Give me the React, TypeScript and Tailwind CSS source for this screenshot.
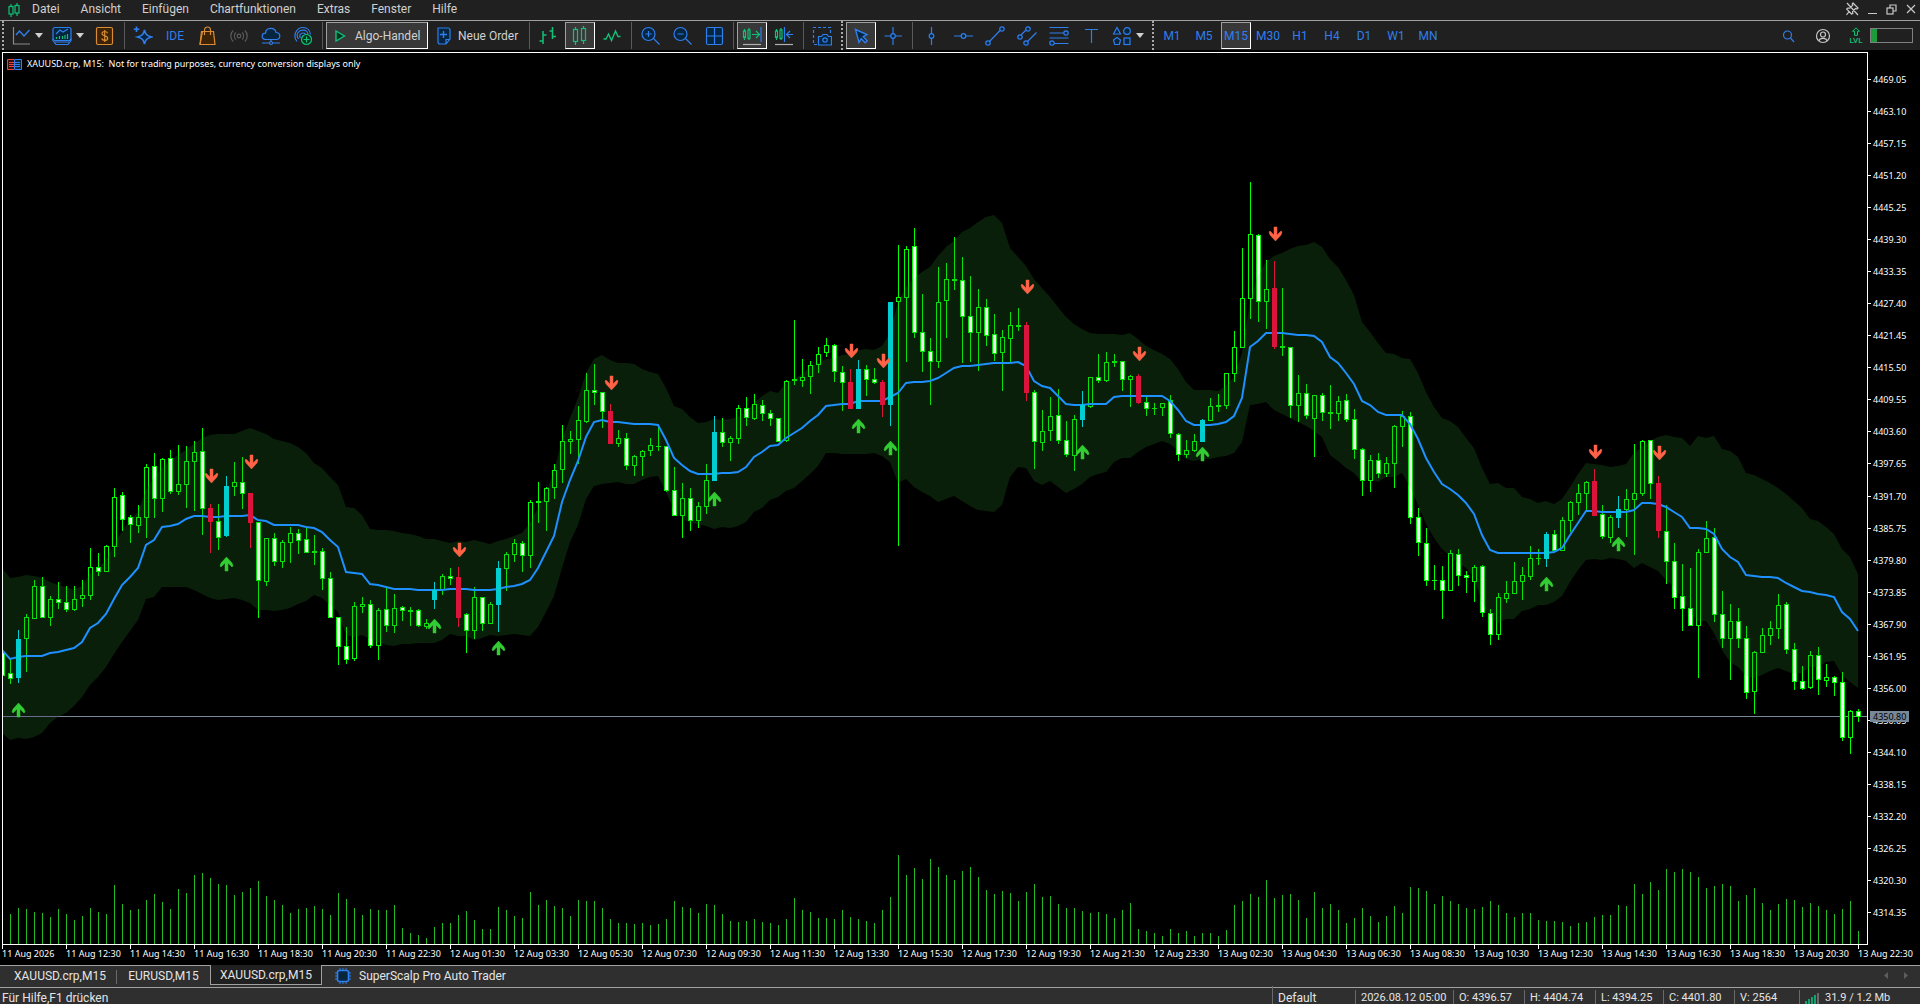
import React, { useState } from 'react';

type Kind = 'u' | 'd' | 'b' | 'r';
type Candle = [Kind, number, number, number, number];

const STEP = 8;
const PLOT_BOTTOM = 944;
const PLOT_RIGHT = 1867;

// kind, high, body top, body bottom, low
const candles: Candle[] = [
    ['d', 652, 652, 676, 676], ['d', 659, 673, 679, 684], ['b', 630, 639, 678, 683], ['u', 614, 617, 639, 672],
    ['u', 580, 586, 619, 619], ['d', 577, 586, 618, 618], ['u', 596, 599, 618, 626], ['d', 582, 599, 603, 609],
    ['d', 586, 602, 610, 612], ['u', 586, 599, 610, 611], ['u', 580, 595, 599, 607], ['u', 548, 567, 596, 600],
    ['d', 553, 567, 572, 576], ['u', 545, 546, 572, 572], ['u', 488, 497, 547, 557], ['d', 492, 495, 520, 531],
    ['d', 515, 517, 525, 543], ['u', 505, 517, 526, 533], ['u', 464, 467, 518, 538], ['d', 453, 466, 499, 518],
    ['u', 458, 459, 499, 512], ['d', 450, 458, 492, 494], ['u', 445, 484, 492, 495], ['u', 446, 461, 485, 508],
    ['u', 441, 452, 462, 511], ['d', 428, 451, 509, 535], ['r', 504, 508, 522, 553], ['d', 504, 521, 538, 550],
    ['b', 476, 486, 536, 537], ['u', 462, 482, 487, 496], ['d', 457, 482, 494, 509], ['r', 493, 493, 523, 548],
    ['d', 522, 522, 581, 618], ['u', 538, 538, 582, 586], ['d', 533, 538, 562, 566], ['u', 540, 542, 562, 568],
    ['u', 527, 533, 543, 563], ['d', 529, 533, 541, 554], ['d', 528, 539, 553, 553], ['d', 535, 551, 553, 565],
    ['d', 548, 551, 579, 590], ['d', 572, 578, 618, 618], ['d', 617, 617, 647, 665], ['d', 627, 646, 660, 664],
    ['u', 602, 606, 659, 661], ['u', 597, 604, 607, 613], ['d', 600, 604, 646, 648], ['u', 608, 610, 646, 660],
    ['d', 588, 609, 626, 632], ['u', 594, 608, 626, 633], ['d', 606, 607, 611, 621], ['d', 607, 610, 612, 626],
    ['d', 609, 610, 626, 627], ['u', 619, 623, 627, 629], ['b', 582, 590, 600, 609], ['u', 574, 576, 590, 595],
    ['d', 568, 576, 579, 585], ['r', 567, 577, 618, 627], ['d', 613, 614, 631, 653], ['u', 587, 597, 631, 639],
    ['d', 597, 597, 624, 631], ['u', 602, 604, 624, 624], ['b', 561, 568, 605, 632], ['u', 552, 554, 569, 591],
    ['u', 539, 543, 555, 562], ['d', 541, 543, 556, 572], ['u', 500, 502, 556, 568], ['d', 482, 501, 503, 523],
    ['u', 487, 488, 502, 531], ['u', 464, 470, 488, 499], ['u', 425, 441, 470, 483], ['u', 431, 439, 442, 454],
    ['u', 406, 420, 440, 464], ['u', 373, 390, 422, 423], ['d', 364, 390, 393, 405], ['d', 392, 392, 412, 428],
    ['r', 404, 411, 444, 444], ['u', 430, 438, 444, 447], ['d', 433, 438, 466, 470], ['u', 455, 456, 466, 476],
    ['u', 450, 451, 457, 476], ['u', 438, 445, 451, 456], ['d', 425, 446, 447, 451], ['d', 446, 446, 491, 492],
    ['d', 467, 490, 516, 516], ['u', 483, 498, 516, 538], ['d', 488, 498, 521, 531], ['u', 502, 506, 521, 528],
    ['u', 464, 480, 507, 514], ['b', 416, 432, 481, 481], ['d', 418, 432, 443, 447], ['u', 436, 438, 443, 461],
    ['u', 405, 408, 439, 444], ['d', 397, 408, 418, 426], ['u', 394, 404, 419, 420], ['d', 400, 405, 414, 421],
    ['d', 410, 413, 419, 426], ['d', 418, 418, 442, 442], ['u', 380, 381, 441, 442], ['d', 320, 379, 381, 385],
    ['u', 359, 377, 381, 387], ['u', 361, 365, 377, 394], ['u', 347, 354, 365, 373], ['u', 338, 345, 353, 357],
    ['d', 344, 345, 372, 382], ['d', 366, 372, 383, 411], ['r', 369, 382, 409, 409], ['b', 360, 369, 409, 409],
    ['d', 365, 369, 380, 396], ['d', 368, 379, 383, 384], ['r', 380, 382, 405, 417], ['b', 302, 302, 405, 426],
    ['u', 245, 297, 302, 546], ['u', 246, 249, 298, 362], ['d', 228, 246, 333, 338], ['d', 294, 332, 352, 372],
    ['d', 338, 351, 362, 405], ['u', 267, 302, 362, 368], ['u', 263, 279, 301, 338], ['d', 237, 279, 281, 290],
    ['d', 257, 280, 317, 363], ['d', 276, 316, 333, 362], ['u', 289, 307, 333, 371], ['d', 299, 307, 336, 346],
    ['d', 314, 334, 354, 361], ['u', 330, 337, 353, 391], ['u', 312, 325, 339, 362], ['d', 308, 325, 327, 331],
    ['r', 322, 325, 393, 401], ['d', 390, 392, 442, 469], ['u', 410, 431, 443, 451], ['u', 397, 416, 431, 441],
    ['d', 389, 415, 441, 444], ['d', 421, 440, 455, 457], ['u', 415, 419, 456, 471], ['b', 391, 405, 420, 427],
    ['u', 377, 377, 407, 408], ['d', 354, 377, 381, 383], ['u', 352, 362, 381, 382], ['d', 354, 361, 363, 367],
    ['d', 361, 361, 380, 391], ['u', 375, 376, 380, 407], ['r', 374, 376, 403, 404], ['d', 397, 402, 409, 416],
    ['d', 403, 408, 409, 415], ['u', 403, 403, 408, 416], ['d', 395, 400, 434, 438], ['d', 433, 434, 455, 461],
    ['u', 440, 450, 455, 458], ['u', 434, 441, 451, 452], ['b', 419, 420, 442, 442], ['u', 398, 406, 421, 421],
    ['d', 394, 405, 407, 412], ['u', 373, 373, 406, 409], ['u', 331, 347, 374, 382], ['u', 248, 298, 348, 348],
    ['u', 182, 234, 299, 319], ['d', 234, 235, 302, 322], ['u', 260, 289, 302, 329], ['r', 261, 288, 347, 349],
    ['d', 288, 346, 348, 356], ['d', 347, 347, 406, 418], ['u', 375, 393, 406, 422], ['d', 384, 393, 416, 419],
    ['u', 395, 395, 419, 457], ['d', 393, 395, 413, 421], ['d', 385, 412, 414, 429], ['u', 396, 401, 414, 421],
    ['d', 394, 400, 420, 422], ['d', 409, 419, 450, 459], ['d', 448, 449, 481, 496], ['u', 455, 460, 481, 492],
    ['d', 453, 460, 474, 478], ['u', 457, 463, 474, 477], ['u', 425, 426, 464, 488], ['u', 411, 416, 427, 447],
    ['d', 412, 416, 518, 524], ['d', 508, 517, 543, 556], ['d', 528, 543, 581, 586], ['d', 565, 580, 581, 590],
    ['d', 566, 580, 591, 619], ['u', 550, 553, 591, 591], ['d', 549, 554, 576, 586], ['d', 571, 575, 578, 593],
    ['u', 565, 567, 582, 602], ['d', 565, 566, 613, 617], ['d', 609, 613, 635, 645], ['u', 593, 597, 635, 640],
    ['u', 581, 593, 599, 603], ['u', 562, 581, 594, 594], ['u', 567, 575, 582, 600], ['u', 546, 558, 577, 580],
    ['d', 549, 558, 559, 565], ['b', 532, 534, 559, 567], ['d', 530, 534, 551, 551], ['u', 517, 520, 551, 551],
    ['u', 501, 502, 521, 532], ['u', 484, 493, 503, 515], ['u', 481, 482, 494, 511], ['r', 469, 481, 516, 516],
    ['d', 505, 514, 537, 539], ['u', 515, 517, 538, 543], ['b', 496, 509, 518, 528], ['u', 489, 499, 510, 537],
    ['u', 444, 493, 500, 555], ['u', 440, 441, 494, 496], ['d', 440, 440, 484, 499], ['r', 476, 483, 531, 538],
    ['d', 505, 531, 562, 584], ['d', 543, 561, 598, 609], ['d', 564, 596, 609, 631], ['d', 568, 608, 626, 626],
    ['u', 549, 552, 626, 678], ['u', 521, 538, 553, 553], ['d', 528, 537, 615, 622], ['d', 591, 614, 639, 648],
    ['u', 604, 621, 639, 680], ['d', 608, 621, 639, 648], ['d', 626, 638, 693, 699], ['u', 651, 652, 692, 714],
    ['u', 628, 635, 653, 653], ['u', 621, 628, 636, 645], ['u', 594, 605, 629, 639], ['d', 602, 604, 650, 654],
    ['d', 643, 649, 682, 690], ['d', 666, 681, 689, 690], ['u', 651, 655, 688, 689], ['d', 647, 655, 680, 695],
    ['u', 664, 677, 681, 687], ['d', 676, 677, 683, 696], ['d', 672, 682, 738, 741], ['u', 710, 711, 738, 754],
    ['d', 709, 711, 717, 722],
];

const middle = [
    650, 659, 657, 656, 656, 656, 653, 652, 650, 648, 642, 628, 623, 614, 599, 585, 577, 568, 545, 540,
    527, 526, 524, 519, 516, 516, 517, 517, 516, 516, 516, 515, 520, 521, 525, 525, 525, 525, 527, 528,
    532, 540, 547, 572, 573, 574, 584, 585, 587, 589, 589, 589, 590, 590, 590, 590, 589, 589, 589, 590,
    590, 590, 589, 587, 586, 584, 580, 568, 552, 536, 502, 480, 461, 437, 422, 420, 422, 422, 423, 424,
    424, 424, 425, 440, 458, 465, 471, 474, 474, 474, 473, 473, 472, 467, 457, 452, 446, 445, 438, 433,
    428, 421, 415, 406, 405, 404, 404, 401, 401, 401, 401, 397, 393, 383, 382, 382, 381, 378, 373, 368,
    366, 366, 365, 364, 363, 363, 363, 362, 366, 381, 386, 388, 396, 404, 405, 405, 404, 404, 404, 397,
    396, 396, 396, 396, 396, 396, 401, 410, 421, 425, 425, 425, 424, 422, 416, 398, 347, 341, 333, 333,
    333, 334, 335, 335, 336, 342, 357, 363, 373, 384, 401, 405, 412, 415, 415, 415, 424, 439, 458, 472,
    484, 489, 495, 503, 514, 535, 550, 553, 553, 553, 553, 553, 553, 553, 552, 548, 535, 523, 511, 511,
    512, 512, 512, 512, 510, 503, 503, 504, 507, 512, 517, 528, 528, 529, 534, 549, 557, 562, 575, 576,
    577, 577, 578, 583, 587, 591, 592, 594, 595, 597, 612, 619, 631,
];

const upper = [
    568, 578, 577, 575, 576, 578, 582, 585, 587, 590, 586, 574, 568, 560, 545, 531, 520, 512, 490, 478,
    468, 461, 455, 450, 444, 438, 435, 434, 434, 434, 431, 428, 431, 434, 439, 441, 443, 447, 453, 463,
    468, 477, 485, 507, 508, 515, 529, 530, 530, 531, 533, 534, 536, 539, 539, 541, 543, 541, 542, 540,
    542, 544, 541, 539, 536, 533, 523, 508, 493, 471, 440, 418, 398, 373, 359, 355, 360, 363, 363, 364,
    369, 372, 374, 388, 406, 409, 417, 423, 422, 419, 420, 419, 417, 412, 403, 396, 391, 393, 383, 379,
    374, 367, 363, 359, 358, 355, 354, 350, 349, 350, 346, 333, 302, 287, 278, 272, 267, 256, 247, 241,
    232, 228, 222, 217, 215, 223, 248, 257, 266, 279, 288, 297, 307, 317, 324, 329, 333, 334, 334, 334,
    335, 333, 339, 346, 350, 354, 359, 369, 382, 390, 390, 390, 391, 386, 377, 353, 302, 275, 262, 256,
    253, 249, 246, 245, 242, 247, 259, 267, 280, 295, 322, 332, 343, 353, 354, 358, 359, 373, 392, 407,
    418, 421, 427, 438, 448, 468, 484, 483, 488, 488, 497, 499, 503, 501, 504, 499, 487, 474, 463, 464,
    465, 467, 466, 464, 453, 447, 441, 437, 435, 437, 438, 446, 436, 438, 436, 449, 451, 457, 473, 475,
    479, 483, 488, 494, 501, 508, 519, 521, 527, 534, 549, 557, 574,
];

const lower = [
    733, 740, 738, 739, 737, 733, 723, 717, 713, 706, 697, 685, 677, 667, 654, 642, 631, 620, 599, 597,
    587, 587, 587, 587, 590, 594, 598, 600, 599, 598, 600, 603, 610, 610, 611, 610, 608, 604, 601, 595,
    598, 605, 612, 635, 637, 635, 639, 642, 645, 646, 644, 644, 643, 643, 643, 640, 634, 636, 636, 640,
    638, 635, 636, 635, 634, 635, 636, 627, 612, 596, 568, 542, 525, 499, 486, 484, 483, 482, 484, 484,
    480, 477, 476, 492, 510, 518, 523, 524, 526, 529, 527, 528, 526, 522, 512, 508, 500, 497, 491, 488,
    481, 474, 466, 453, 453, 454, 454, 454, 454, 453, 456, 462, 483, 479, 487, 492, 496, 502, 499, 496,
    501, 506, 510, 511, 512, 505, 477, 467, 468, 481, 485, 481, 487, 493, 489, 484, 477, 474, 472, 462,
    458, 458, 452, 447, 444, 441, 444, 451, 459, 461, 459, 459, 457, 456, 453, 442, 405, 404, 402, 410,
    414, 418, 422, 426, 431, 437, 455, 461, 468, 473, 482, 478, 482, 477, 477, 473, 487, 505, 524, 538,
    549, 556, 563, 568, 578, 603, 617, 623, 619, 619, 611, 609, 605, 605, 602, 596, 582, 570, 560, 559,
    560, 558, 559, 561, 568, 563, 567, 571, 580, 587, 598, 612, 621, 621, 633, 650, 662, 667, 676, 678,
    675, 671, 668, 671, 674, 673, 667, 667, 662, 661, 675, 682, 688,
];

const volumes = [
    0, 30, 36, 35, 32, 31, 27, 35, 30, 24, 28, 36, 32, 30, 59, 40, 34, 35, 44, 50,
    42, 35, 55, 51, 69, 71, 66, 60, 59, 49, 52, 56, 63, 48, 44, 39, 31, 35, 36, 38,
    35, 29, 51, 45, 36, 29, 35, 34, 34, 39, 16, 11, 9, 6, 17, 21, 21, 29, 33, 24,
    15, 15, 37, 34, 28, 26, 52, 39, 44, 38, 36, 28, 44, 43, 43, 36, 25, 21, 21, 20,
    21, 19, 20, 25, 43, 37, 36, 31, 40, 39, 30, 23, 22, 23, 25, 22, 21, 19, 25, 46,
    34, 32, 26, 26, 25, 34, 27, 25, 23, 21, 34, 47, 89, 69, 76, 65, 85, 77, 69, 64,
    73, 77, 67, 54, 50, 53, 51, 43, 52, 60, 47, 48, 40, 36, 36, 33, 31, 32, 30, 26,
    34, 41, 15, 13, 11, 8, 15, 11, 13, 8, 11, 11, 8, 14, 39, 43, 50, 47, 64, 46,
    49, 50, 44, 26, 52, 36, 40, 34, 21, 26, 36, 28, 22, 28, 38, 31, 57, 56, 53, 40,
    48, 43, 40, 36, 35, 37, 43, 39, 31, 27, 31, 31, 24, 23, 23, 22, 18, 21, 22, 27,
    29, 29, 39, 38, 60, 50, 62, 54, 75, 72, 75, 72, 67, 56, 58, 60, 58, 43, 49, 56,
    41, 34, 40, 45, 44, 37, 41, 38, 34, 30, 35, 43, 13,
];

// candle index, top of the arrow
const sellArrows = [[26, 469], [31, 455], [57, 543], [76, 376], [106, 344], [110, 354], [128, 280], [142, 347], [159, 227], [199, 445], [207, 446]];
const buyArrows = [[2, 703], [28, 557], [54, 619], [62, 641], [89, 492], [107, 419], [111, 441], [135, 445], [150, 447], [193, 577], [202, 537]];

const timeLabels = [
    '11 Aug 2026', '11 Aug 12:30', '11 Aug 14:30', '11 Aug 16:30', '11 Aug 18:30', '11 Aug 20:30', '11 Aug 22:30',
    '12 Aug 01:30', '12 Aug 03:30', '12 Aug 05:30', '12 Aug 07:30', '12 Aug 09:30', '12 Aug 11:30', '12 Aug 13:30',
    '12 Aug 15:30', '12 Aug 17:30', '12 Aug 19:30', '12 Aug 21:30', '12 Aug 23:30', '13 Aug 02:30', '13 Aug 04:30',
    '13 Aug 06:30', '13 Aug 08:30', '13 Aug 10:30', '13 Aug 12:30', '13 Aug 14:30', '13 Aug 16:30', '13 Aug 18:30',
    '13 Aug 20:30', '13 Aug 22:30',
];

const priceLabels = Array.from({ length: 27 }, (_, i) => (4469.05 - i * 5.95).toFixed(2));

const xAt = (i: number) => 2 + i * STEP;

const CandleShape = ({ candle, index }: { candle: Candle; index: number }) => {
    const [kind, high, top, bottom, low] = candle;
    const x = xAt(index);
    const colors = { u: '#00ff00', d: '#00ff00', b: '#00ced1', r: '#dc143c' };
    const color = colors[kind];
    const hollow = kind === 'u' || kind === 'd';
    return (
        <g>
            <rect x={x} y={high} width={1} height={low - high} fill={color} />
            <rect x={x - 2} y={top} width={5} height={bottom - top} fill={color} />
            {hollow && bottom - top > 2 && (
                <rect x={x - 1} y={top + 1} width={3} height={bottom - top - 2} fill={kind === 'u' ? '#000000' : '#ffffff'} />
            )}
        </g>
    );
};

const PriceChart = () => {
    const line = middle.map((y, i) => `${xAt(i)},${y}`).join(' ');
    const band = [
        ...upper.map((y, i) => `${xAt(i)},${y}`),
        ...lower.map((y, i) => `${xAt(i)},${y}`).reverse(),
    ].join(' ');
    const isSignal = (c: Candle) => c[0] === 'b' || c[0] === 'r';

    return (
        <svg viewBox="0 50 1920 915" className="block w-full h-full font-['Noto_Sans','Open_Sans',sans-serif] text-[9px]" role="img" aria-label="XAUUSD.crp, M15">
            <defs>
                <clipPath id="plot">
                    <rect x={2} y={52} width={PLOT_RIGHT - 2} height={PLOT_BOTTOM - 52} />
                </clipPath>
            </defs>
            <g clipPath="url(#plot)" className="isolate">
                <rect x={0} y={50} width={1920} height={915} fill="#000000" />
                <g shapeRendering="crispEdges">
                    {volumes.map((v, i) => (
                        <rect key={i} x={xAt(i)} y={PLOT_BOTTOM - v} width={1} height={v} fill="#22bb22" />
                    ))}
                    <rect x={2} y={716} width={PLOT_RIGHT} height={1} fill="#778899" />
                    {candles.map((c, i) => !isSignal(c) && <CandleShape key={i} candle={c} index={i} />)}
                </g>
                <polygon points={band} fill="#091f09" className="mix-blend-difference" />
                <polyline points={line} fill="none" stroke="#1e90ff" strokeWidth={2} />
                <g shapeRendering="crispEdges">
                    {candles.map((c, i) => isSignal(c) && <CandleShape key={i} candle={c} index={i} />)}
                </g>
                {sellArrows.map(([i, y]) => (
                    <path key={i} transform={`translate(${xAt(i) - 5} ${y})`} d="M5 0h3v8l4-4 1 1-1 3-5.500 6L1 8 0 5l1-1 4 4z" fill="#ff6347" stroke="#ff6347" strokeWidth={0.5} />
                ))}
                {buyArrows.map(([i, y]) => (
                    <path key={i} transform={`translate(${xAt(i) - 6} ${y})`} d="M5 14h3V6l4 4 1-1-1-3-5.500-6L1 6 0 9l1 1 4-4z" fill="#32cd32" stroke="#32cd32" strokeWidth={0.5} />
                ))}
            </g>
            <g shapeRendering="crispEdges" fill="#ffffff">
                <rect x={2} y={52} width={PLOT_RIGHT - 1} height={1} />
                <rect x={2} y={52} width={1} height={PLOT_BOTTOM - 52} />
                <rect x={PLOT_RIGHT} y={52} width={1} height={PLOT_BOTTOM - 51} />
                <rect x={2} y={PLOT_BOTTOM} width={PLOT_RIGHT - 1} height={1} />
            </g>
            <g fill="#ffffff">
                {priceLabels.map((p, i) => {
                    const y = Math.round(79 + i * 32.04);
                    return (
                        <g key={p}>
                            <rect x={PLOT_RIGHT} y={y} width={4} height={1} />
                            <text x={1873} y={y + 4}>{p}</text>
                        </g>
                    );
                })}
                {timeLabels.map((t, i) => (
                    <g key={t}>
                        <rect x={2 + i * 64} y={PLOT_BOTTOM} width={1} height={5} />
                        <text x={2 + i * 64} y={957}>{t}</text>
                    </g>
                ))}
            </g>
            <rect x={1870} y={711} width={39} height={11} fill="#778899" />
            <text x={1873} y={720} fill="#000000">4350.80</text>
        </svg>
    );
};

const Icon = ({ children, color = '#2f7fee' }: { children: React.ReactNode; color?: string }) => (
    <svg width="20" height="20" viewBox="0 0 20 20" fill="none" stroke={color} strokeWidth="1.2" className="shrink-0" aria-hidden="true">
        {children}
    </svg>
);

const Caret = () => (
    <svg width="8" height="5" viewBox="0 0 8 5" className="shrink-0" aria-hidden="true">
        <path d="M0 0h8L4 5z" fill="#d0d0d0" />
    </svg>
);

const Separator = () => (
    <div className="w-1 h-[27px] flex justify-center shrink-0">
        <div className="w-px h-full bg-[#5a5a5a]" />
    </div>
);

const Grip = () => (
    <div className="w-[5px] h-full flex justify-center shrink-0">
        <div className="h-full border-l-2 border-dotted border-[#a8a8a8]" />
    </div>
);

const pressed = 'bg-[#383838] border border-t-[#a0a0a0] border-l-[#a0a0a0] border-b-white border-r-white';

const Tool = ({ label, active = false, children }: { label: string; active?: boolean; children: React.ReactNode }) => (
    <button aria-label={label} className={`w-[30px] h-[27px] flex items-center justify-center shrink-0 ${active ? pressed : ''}`}>
        {children}
    </button>
);

const timeframes = ['M1', 'M5', 'M15', 'M30', 'H1', 'H4', 'D1', 'W1', 'MN'];

const Toolbar = () => {
    const [frame, setFrame] = useState('M15');
    return (
        <div className="h-[29px] flex items-center gap-0.5 bg-[#202020] text-[12px] text-[#d0d0d0]">
            <Grip />
            <button aria-label="Neuer Chart" className="w-[39px] h-[27px] flex items-center gap-1 pl-1 shrink-0">
                <Icon color="#8a8a8a"><path d="M2.500 1v17H19" /><path d="M5 9l3.500-4 4.500 5 5.500-6" stroke="#2f7fee" strokeWidth="1.400" /></Icon>
                <Caret />
            </button>
            <button aria-label="Vorlagen" className="w-10 h-[27px] flex items-center gap-1 pl-1 shrink-0">
                <Icon>
                    <rect x="1" y="1.500" width="18" height="13" rx="2" fill="#06263f" />
                    <path d="M1 12.500v2l3 4h12l3-4v-2M3 16h14M4 8l4-4 3 2 5-3" />
                    <path d="M4.500 13v-2M7.500 13v-3M10.500 13v-3M13 13v-4M15.500 13V8" stroke="#12c078" />
                </Icon>
                <Caret />
            </button>
            <Tool label="Handel">
                <Icon color="#d98c34">
                    <rect x="1.500" y="1.500" width="16" height="17" rx="1.500" fill="#3c2306" />
                    <path d="M12.500 7.200c-.4-1.200-1.400-1.700-2.800-1.700-1.500 0-2.700.7-2.700 2.100 0 3 5.700 1.600 5.700 4.600 0 1.400-1.300 2.200-3 2.200-1.500 0-2.600-.6-3-1.900M9.700 4v12" />
                </Icon>
            </Tool>
            <Separator />
            <Tool label="Assistent">
                <Icon>
                    <path d="M11.500 4c.8 4 2 5.700 7 7-5 1.300-6.200 3-7 7-.8-4-2-5.700-7-7 5-1.300 6.200-3 7-7z" fill="#06263f" strokeWidth="1.600" />
                    <path d="M3.500.5v5.500M.8 3.200h5.500" strokeWidth="1.600" />
                </Icon>
            </Tool>
            <button className="w-[30px] h-[27px] text-[12px] text-[#2f7fee] shrink-0">IDE</button>
            <Tool label="Market">
                <Icon color="#d98c34"><path d="M4.500 5.500h12l1.500 13H3z" fill="#3c2306" /><path d="M5.500 5.500L3 18.500M7.500 9V4c0-4 6-4 6 0v5" /></Icon>
            </Tool>
            <Tool label="Signale">
                <Icon color="#5c5c5c">
                    <circle cx="10" cy="10" r="1.800" />
                    <path d="M6.800 6.500c-1.800 2-1.800 5 0 7M13.200 6.500c1.800 2 1.800 5 0 7M4.200 4.500C1 7.500 1 12.500 4.200 15.500M15.800 4.500c3.200 3 3.200 8 0 11" />
                </Icon>
            </Tool>
            <Tool label="Cloud">
                <Icon>
                    <path d="M5 13.500c-5 0-5-6-.5-6.300C5 1 14 1 15 6.500c5 0 5 7 .5 7z" fill="#06263f" />
                    <path d="M10 13.500v2.500M1 17h7.500M11.500 17H19" /><circle cx="10" cy="17" r="1.500" />
                </Icon>
            </Tool>
            <Tool label="VPS">
                <Icon>
                    <path d="M4 15.500C-1 9 4 1.500 10 1.500c4 0 7 3 7.500 7M5.500 13C2 8 6 4.200 10 4.200c3 0 5 2 5 4.500M7.500 12c-2-3 .5-5 2.500-5 1.500 0 2.500 1 2.800 2M10 9.500v3" />
                    <circle cx="13.500" cy="13.500" r="5" stroke="#12c078" fill="#06331f" /><path d="M13.500 10.500v6M10.500 13.500h6" stroke="#12c078" />
                </Icon>
            </Tool>
            <Separator />
            <button className={`w-[102px] h-[27px] flex items-center gap-1 pl-1 shrink-0 whitespace-nowrap ${pressed}`}>
                <Icon color="#12c078"><path d="M5 5l8.500 5L5 15z" fill="#06331f" strokeWidth="1.400" /></Icon>
                <span>Algo-Handel</span>
            </button>
            <button className="w-[95px] h-[27px] flex items-center gap-1 pl-1 shrink-0 whitespace-nowrap">
                <Icon><path d="M4 2h10q2 0 2 2v9l-4 5H6q-2 0-2-2zM12 18v-4.500h4" fill="#06263f" /><path d="M9.500 5v7M6 8.500h7" strokeWidth="1.400" /></Icon>
                <span>Neue Order</span>
            </button>
            <Separator />
            <Tool label="Balken"><Icon color="#12c078"><path d="M5 5v13M1.500 15H5M5 9h3.500M14.500 1v12M11.500 5h3M14.500 10.500H18" strokeWidth="1.500" /></Icon></Tool>
            <Tool label="Kerzen" active><Icon color="#12c078"><path d="M5.500 1v18M13.500 0v18" /><rect x="3.500" y="3.500" width="4" height="12" fill="#383838" /><rect x="11.500" y="2.500" width="4" height="12" fill="#383838" /></Icon></Tool>
            <Tool label="Linie"><Icon color="#12c078"><path d="M1.500 13H4l2.500-5 3 6.500L13.500 5l2.500 5.500h2.500" strokeWidth="1.400" /></Icon></Tool>
            <Separator />
            <Tool label="Vergrößern"><Icon><circle cx="8.500" cy="8" r="6.500" fill="#06263f" /><path d="M13.500 12.500l6 6M8.500 5v6M5.500 8h6" /></Icon></Tool>
            <Tool label="Verkleinern"><Icon><circle cx="8.500" cy="8" r="6.500" fill="#06263f" /><path d="M13.500 12.500l6 6M5.500 8h6" /></Icon></Tool>
            <Tool label="Fenster anordnen"><Icon><rect x="2.500" y="1.500" width="16" height="17" rx="1.500" fill="#06263f" /><path d="M10.500 1.500v17M2.500 10h16" /></Icon></Tool>
            <Separator />
            <Tool label="Auto-Scroll" active>
                <Icon color="#12c078">
                    <path d="M2.500 3v11M7 2v12M10 8.500h7M14 5l3.500 3.500L14 12" /><rect x="1.500" y="5" width="2" height="6.500" fill="#383838" /><rect x="6" y="4" width="2" height="8.500" fill="#383838" />
                    <path d="M19 1v15" stroke="#2f7fee" /><path d="M1 18.500h18" stroke="#b0b0b0" />
                </Icon>
            </Tool>
            <Tool label="Chartverschiebung">
                <Icon color="#12c078">
                    <path d="M2.500 3v11M7 2v12" /><rect x="1.500" y="5" width="2" height="6.500" fill="#202020" /><rect x="6" y="4" width="2" height="8.500" fill="#202020" />
                    <path d="M10.500 1v15M19 8.500h-6M16 5l-3.500 3.500L16 12" stroke="#2f7fee" /><path d="M1 18.500h18" stroke="#b0b0b0" />
                </Icon>
            </Tool>
            <Separator />
            <Tool label="Screenshot">
                <Icon>
                    <path d="M5 18.500H1.500V1.500h17V8" strokeDasharray="3 2" />
                    <path d="M6.500 10.500h3l1.500-2h4l1.500 2h3v8.500h-13z" fill="#06263f" /><circle cx="13" cy="14" r="2.200" />
                </Icon>
            </Tool>
            <Grip />
            <Tool label="Cursor" active><Icon><path d="M4.500 3.500l11.500 5-3.800 2.200 4 4-2 2-4-4L8 16.500z" fill="#06263f" strokeWidth="1.400" /></Icon></Tool>
            <Tool label="Fadenkreuz"><Icon><path d="M10 1v6.500M10 12.500V19M1.500 10H7.500M12.500 10H19" /><circle cx="10" cy="10" r="2.300" fill="#06263f" /></Icon></Tool>
            <Separator />
            <Tool label="Vertikale Linie"><Icon><path d="M10.500 1v6.500M10.500 12.500V19" /><circle cx="10.500" cy="10" r="2.300" fill="#06263f" /></Icon></Tool>
            <Tool label="Horizontale Linie"><Icon><path d="M1 10h7M13 10h7" /><circle cx="10.500" cy="10" r="2.300" fill="#06263f" /></Icon></Tool>
            <Tool label="Trendlinie"><Icon><path d="M4.500 15.500l11-11.500" /><circle cx="3" cy="17" r="2.200" fill="#06263f" /><circle cx="17" cy="3" r="2.200" fill="#06263f" /></Icon></Tool>
            <Tool label="Kanal"><Icon><path d="M4 9l6-6M10.500 15.500l9-9" /><circle cx="3" cy="11" r="2.200" fill="#06263f" /><circle cx="11" cy="3" r="2.200" fill="#06263f" /><circle cx="9" cy="17" r="2.200" fill="#06263f" /></Icon></Tool>
            <Tool label="Fibonacci"><Icon><path d="M.5 1.500h19M.5 7h14M.5 12h19M5 17.500h14.500" /><circle cx="17" cy="7" r="2.200" fill="#06263f" /><circle cx="3" cy="17" r="2.200" fill="#06263f" /></Icon></Tool>
            <Tool label="Text"><Icon><path d="M4 3.500h13M10.500 3.500V17" /></Icon></Tool>
            <button aria-label="Objekte" className="w-10 h-[27px] flex items-center gap-1 pl-1 shrink-0">
                <Icon>
                    <path d="M1.500 8l3.500-6.500L8.500 8z" fill="#06263f" /><circle cx="15" cy="5" r="3.300" fill="#06263f" />
                    <path d="M5 11.500l3.500 2.500-1.200 4.500H2.700L1.500 14z" fill="#06263f" /><rect x="12" y="12" width="6" height="6.500" fill="#06263f" />
                </Icon>
                <Caret />
            </button>
            <Grip />
            {timeframes.map(tf => (
                <button
                    key={tf}
                    onClick={() => setFrame(tf)}
                    className={`w-[30px] h-[27px] text-[#2f7fee] shrink-0 ${tf === frame ? pressed : ''}`}
                >
                    {tf}
                </button>
            ))}
            <div className="ml-auto flex items-center gap-1 pr-[7px]">
                <Tool label="Suche"><Icon><circle cx="8.500" cy="9" r="4" /><path d="M11.500 12l3.500 4" /></Icon></Tool>
                <Tool label="Konto"><Icon color="#c8c8c8"><circle cx="10" cy="10" r="6.500" /><circle cx="10" cy="8.500" r="2.500" /><path d="M6 15c.5-3.500 7.500-3.500 8 0" /></Icon></Tool>
                <button aria-label="Level" className="w-5 h-[27px] ml-1 flex flex-col items-center justify-center shrink-0">
                    <svg width="10" height="9" viewBox="0 0 10 9" fill="none" stroke="#12c078" aria-hidden="true"><path d="M5 .8l3.500 3.500h-2v4h-3v-4h-2z" fill="#06331f" /></svg>
                    <span className="text-[8px] leading-[9px] font-medium text-[#12c078]">LVL</span>
                </button>
                <div className="w-[43px] h-[15px] border border-[#808080] flex">
                    <div className="w-[6px] h-full bg-[#1d9a3c]" />
                </div>
            </div>
        </div>
    );
};

const menus = ['Datei', 'Ansicht', 'Einfügen', 'Chartfunktionen', 'Extras', 'Fenster', 'Hilfe'];

const MenuBar = () => (
    <header className="h-[21px] flex items-center bg-[#202020] border-b border-[#a0a0a0] text-[12px] text-[#d0d0d0]">
        <svg width="12" height="14" viewBox="0 0 12 14" fill="none" stroke="#12c078" strokeWidth="1.200" className="ml-2 mr-px" aria-hidden="true">
            <path d="M3 1v13M9 0v13" /><rect x="1" y="3.500" width="4" height="7.500" fill="#202020" /><rect x="7" y="2.500" width="4" height="7.500" fill="#202020" />
        </svg>
        <nav className="flex">
            {menus.map(m => (
                <button key={m} className="pl-[11px] pr-[10px] pb-0.5 leading-[18px]">{m}</button>
            ))}
        </nav>
        <div className="ml-auto flex items-center gap-[9px] pr-1 pb-0.5">
            <button aria-label="Anheften">
                <svg width="13" height="14" viewBox="0 0 13 14" fill="none" stroke="#c8c8c8" strokeWidth="1.200" aria-hidden="true"><path d="M1 1l11 12M7 1l5 5-1 1-1.500-.5-3 3 .3 2L5.500 12l-5-5L1.800 6l2 .2 3-3L6.200 2zM3 9.500L.5 13" /></svg>
            </button>
            <button aria-label="Minimieren">
                <svg width="9" height="12" viewBox="0 0 9 12" stroke="#c8c8c8" aria-hidden="true"><path d="M0 10.500h9" /></svg>
            </button>
            <button aria-label="Wiederherstellen">
                <svg width="11" height="11" viewBox="0 0 11 11" fill="none" stroke="#c8c8c8" strokeWidth="1.200" aria-hidden="true"><path d="M4 4V1h6v6H7" /><rect x="1" y="4" width="6" height="6" /></svg>
            </button>
            <button aria-label="Schließen">
                <svg width="10" height="10" viewBox="0 0 10 10" stroke="#c8c8c8" strokeWidth="1.200" aria-hidden="true"><path d="M1 1l8 8M9 1L1 9" /></svg>
            </button>
        </div>
    </header>
);

const TabBar = () => (
    <div className="h-[22px] flex bg-[#2f2f2f] text-[12px] leading-[18px] text-[#e4e4e4]">
        <div className="flex flex-1 border-t border-[#a0a0a0]">
            <button className="w-[116px] pl-1 pb-0.5">XAUUSD.crp,M15</button>
            <div className="w-px h-[14px] mt-1 bg-[#6a6a6a]" />
            <button className="w-[93px] pb-0.5">EURUSD,M15</button>
            <button className="w-[112px] h-5 -mt-px bg-[#202020] border border-t-0 border-[#a0a0a0]">XAUUSD.crp,M15</button>
            <button className="flex items-center gap-2 pl-[13px] pb-0.5">
                <svg width="16" height="16" viewBox="0 0 16 16" fill="none" stroke="#2f7fee" aria-hidden="true">
                    <path d="M5 0v16M8 0v16M11 0v16M0 5h16M0 8h16M0 11h16" /><rect x="2.500" y="2.500" width="11" height="11" rx="2" fill="#06263f" strokeWidth="1.600" />
                </svg>
                <span>SuperScalp Pro Auto Trader</span>
            </button>
            <div className="ml-auto flex items-center gap-4 pr-3 pb-0.5">
                <button aria-label="Zurück"><svg width="4" height="7" viewBox="0 0 4 7" aria-hidden="true"><path d="M4 0v7L0 3.500z" fill="#5c5c5c" /></svg></button>
                <button aria-label="Weiter"><svg width="4" height="7" viewBox="0 0 4 7" aria-hidden="true"><path d="M0 0v7l4-3.500z" fill="#5c5c5c" /></svg></button>
            </div>
        </div>
    </div>
);

const StatusBar = () => (
    <footer className="h-[17px] flex items-center border-t border-[#a0a0a0] bg-[#2f2f2f] text-[12px] leading-[16px] text-[#e4e4e4] whitespace-nowrap">
        <span className="flex-1 pl-[2px] pt-1">Für Hilfe,F1 drücken</span>
        <span className="w-[83px] pl-[5px] pt-1 border-l border-[#6a6a6a]">Default</span>
        <div className="flex pt-1 text-[11px]">
            <span className="w-[98px] pl-[5px] border-l border-[#6a6a6a]">2026.08.12 05:00</span>
            <span className="w-[71px] pl-[5px] border-l border-[#6a6a6a]">O: 4396.57</span>
            <span className="w-[71px] pl-[5px] border-l border-[#6a6a6a]">H: 4404.74</span>
            <span className="w-[68px] pl-[5px] border-l border-[#6a6a6a]">L: 4394.25</span>
            <span className="w-[71px] pl-[5px] border-l border-[#6a6a6a]">C: 4401.80</span>
            <span className="w-[65px] pl-[5px] border-l border-[#6a6a6a]">V: 2564</span>
            <span className="w-[121px] pl-[5px] flex items-center gap-[5px] border-l border-[#6a6a6a]">
                <svg width="15" height="11" viewBox="0 0 15 11" aria-hidden="true">
                    <path d="M0 8h2v3H0zM3 6h2v5H3zM6 4h2v7H6zM9 2h2v9H9z" fill="#12a070" /><path d="M12 0h2v11h-2z" fill="#6a6a6a" />
                </svg>
                31.9 / 1.2 Mb
            </span>
        </div>
    </footer>
);

const App = () => {
    return (
        <div className="h-screen flex flex-col overflow-hidden bg-black font-['Roboto','Open_Sans',sans-serif]">
            <MenuBar />
            <Toolbar />
            <main className="relative flex-1 min-h-0">
                <PriceChart />
                <div className="absolute left-[7px] top-2 flex items-center gap-[5px] font-['Noto_Sans','Open_Sans',sans-serif] text-[9px] leading-[12px] text-white">
                    <svg width="15" height="11" viewBox="0 0 15 11" fill="none" aria-hidden="true">
                        <path d="M7 .5H.5v10H7" stroke="#e8483c" fill="#3a0f0c" /><path d="M7.500 .5h7v10h-7z" stroke="#2f7fee" fill="#06263f" />
                        <path d="M2 3.500h5M2 5.500h5M2 7.500h5" stroke="#e8483c" /><path d="M8 3.500h5M8 5.500h5M8 7.500h5" stroke="#2f7fee" />
                    </svg>
                    <h1 className="whitespace-pre">XAUUSD.crp, M15:  Not for trading purposes, currency conversion displays only</h1>
                </div>
            </main>
            <TabBar />
            <StatusBar />
        </div>
    );
};

export default App;
